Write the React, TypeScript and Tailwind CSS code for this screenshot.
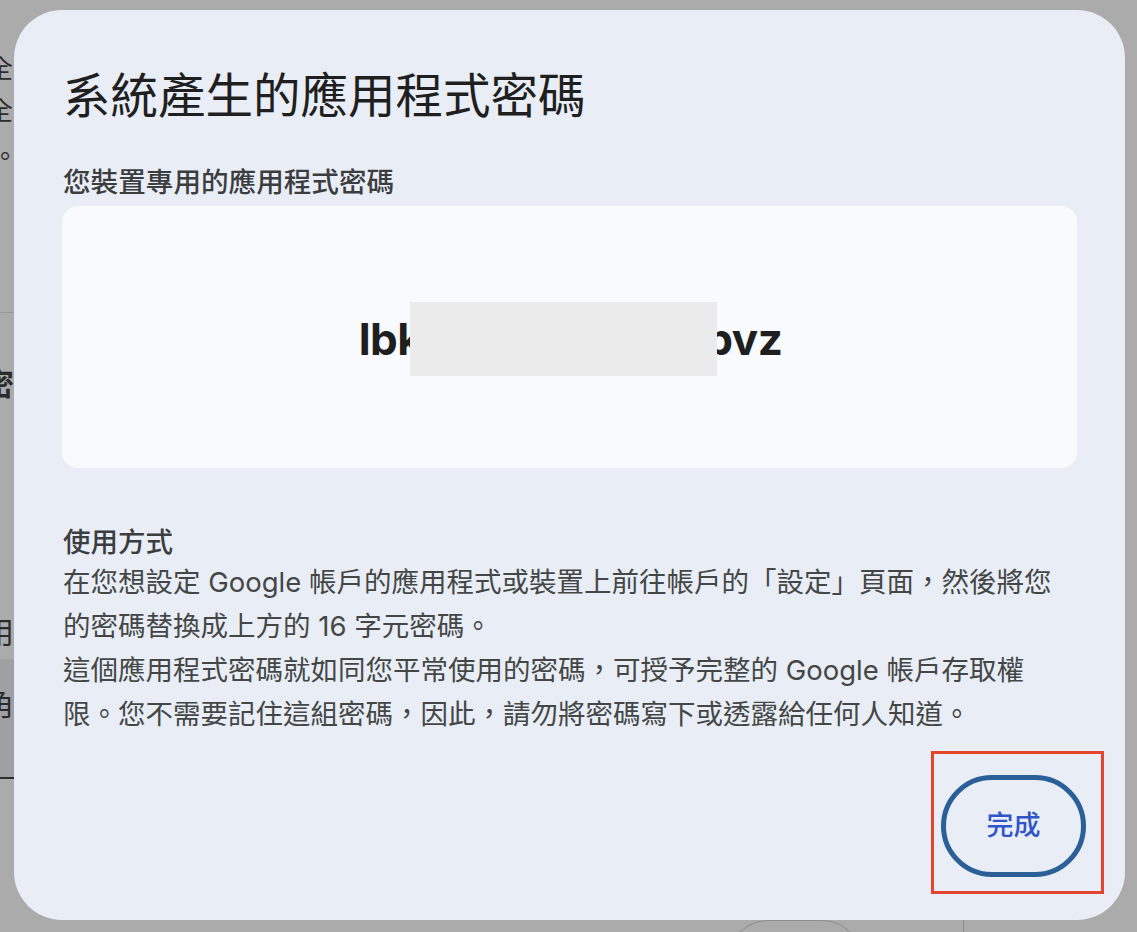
export default function App() {
  return (
    <div className="relative flex h-[932px] w-[1137px] flex-col overflow-hidden bg-[#ababab] font-['Inter','Noto_Sans_CJK_TC',sans-serif]">
      {/* dimmed page behind the dialog */}
      <div className="flex flex-col pt-[48px] text-[26px] leading-[42px] text-[#2b2b2b]">
        <p className="-ml-[13px]">全</p>
        <p className="-ml-[13px]">全</p>
        <p className="-ml-[8px] mt-[4px]">。</p>
        <div className="mt-[134px] h-px w-[14px] bg-[#979797]" />
        <p className="-ml-[16px] mt-[50px] text-[30px] font-bold">密</p>
        <p className="-ml-[16px] mt-[206px] text-[30px]">用</p>
        <div className="mt-[6px] h-[120px] w-[14px] border-b-[2px] border-[#2e2e2e] bg-[#9ea0a4] pt-[24px]">
          <p className="-ml-[16px] text-[30px]">角</p>
        </div>
      </div>
      <div className="mt-auto flex h-[12px] items-start">
        <div className="ml-[728px] h-[80px] w-[134px] rounded-full border border-[#8d8d8d]" />
        <div className="ml-[101px] h-[12px] w-px bg-[#8d8d8d]" />
      </div>

      {/* dialog */}
      <div className="absolute left-[14px] top-[10px] flex h-[910px] w-[1111px] flex-col rounded-[48px] bg-[#e9eef6] px-[48px]">
        <h1 className="mt-[58px] pl-[1px] text-[47.5px] font-normal leading-[56px] text-[#1f1f1f]">
          系統產生的應用程式密碼
        </h1>
        <h2 className="mt-[41px] pl-[1px] text-[27.6px] font-medium leading-[34px] text-[#3c3d3f]">
          您裝置專用的應用程式密碼
        </h2>
        <div className="mt-[7px] flex h-[262px] items-center justify-center rounded-[16px] bg-[#f8fafd] pt-[4px]">
          <div className="ml-[2px] flex items-center text-[44px] font-bold tracking-[-0.5px] text-[#1f1f1f]">
            <span>lbk</span>
            <span className="relative -ml-[12px] h-[74px] w-[307px] bg-[#ebebeb]" />
            <span className="-ml-[12px]">bvz</span>
          </div>
        </div>
        <h3 className="mt-[56px] pl-[1px] text-[27.5px] font-medium leading-[36px] text-[#3c3d3f]">使用方式</h3>
        <div className="pl-[1px] text-[27.5px] leading-[44px] text-[#444746]">
          <p>
            在您想設定 Google 帳戶的應用程式或裝置上前往帳戶的「設定」頁面，然後將您
            <br />
            的密碼替換成上方的 16 字元密碼。
          </p>
          <p>
            這個應用程式密碼就如同您平常使用的密碼，可授予完整的 Google 帳戶存取權
            <br />
            限。您不需要記住這組密碼，因此，請勿將密碼寫下或透露給任何人知道。
          </p>
        </div>
        <div className="mt-[15px] flex justify-end">
          <div className="-mr-[27px] border-[3px] border-[#e3452d] pb-[14px] pl-[7px] pr-[15px] pt-[21px]">
            <button className="flex h-[102px] w-[145px] items-center justify-center rounded-full border-[5px] border-[#2a5f98] text-[27px] font-medium text-[#2f55c8]">
              完成
            </button>
          </div>
        </div>
      </div>
    </div>
  );
}
